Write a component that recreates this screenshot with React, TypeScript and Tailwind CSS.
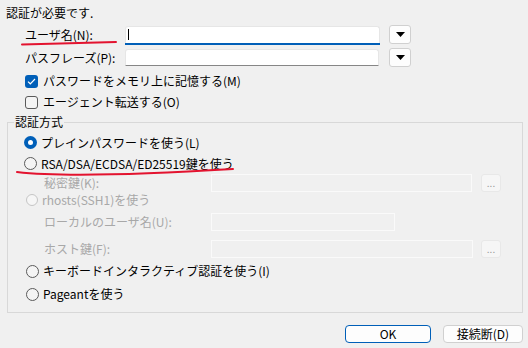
import React from "react";

const Radio = ({ state }: { state: "on" | "off" | "dis" }) => {
  if (state === "on")
    return (
      <span className="flex h-[13px] w-[13px] shrink-0 items-center justify-center rounded-full bg-[#005fb8]">
        <span className="h-[5px] w-[5px] rounded-full bg-white" />
      </span>
    );
  if (state === "dis")
    return <span className="h-[12px] w-[12px] shrink-0 rounded-full border border-[#c5c5c5] bg-[#f6f6f6]" />;
  return <span className="h-[13px] w-[13px] shrink-0 rounded-full border border-[#5a5a5a] bg-[#f4f4f4]" />;
};

const DropBtn = () => (
  <div className="flex h-[19px] w-[22px] items-center justify-center rounded-[3px] border border-[#d0d0d0] bg-[#fdfdfd]">
    <svg width="9" height="5" viewBox="0 0 9 5">
      <path d="M0 0H9L4.5 5Z" fill="#000" />
    </svg>
  </div>
);

const DotsBtn = () => (
  <div className="flex h-[18px] w-[20px] items-center justify-center rounded-[3px] border border-[#e8e8e8] bg-[#f6f6f6] text-[10px] leading-none text-[#9a9a9a]">
    ...
  </div>
);

const DisInput = ({ w }: { w: string }) => (
  <div className={`h-[18px] ${w} border border-[#fafafa] bg-[#f0f0f0]`} />
);

export default function App() {
  return (
    <div className="relative h-[348px] w-[528px] overflow-hidden bg-[#f0f0f0] font-['Noto_Sans_CJK_JP',sans-serif] text-[12px] leading-none text-black">
      {/* header */}
      <div className="flex h-[25px] items-center pl-[6px]">認証が必要です.</div>

      {/* username */}
      <div className="flex h-[19px] items-center">
        <div className="w-[125px] pl-[25px]">ユーザ名(N):</div>
        <div className="relative h-[17px] w-[255px] rounded-t-[3px] border border-b-0 border-[#e6e6e6] bg-white">
          <div className="absolute left-[2px] top-[2px] h-[11px] w-[1px] bg-black" />
          <div className="absolute -left-[1px] -right-[1px] bottom-[-2px] h-[2px] bg-[#005fb8]" />
        </div>
        <div className="ml-[9px]">
          <DropBtn />
        </div>
      </div>

      {/* passphrase */}
      <div className="mt-[4px] flex h-[19px] items-center">
        <div className="w-[125px] pl-[25px]">パスフレーズ(P):</div>
        <div className="h-[17px] w-[254px] rounded-t-[3px] border border-b-[#868686] border-[#e6e6e6] bg-white" />
        <div className="ml-[10px]">
          <DropBtn />
        </div>
      </div>

      {/* checkboxes */}
      <div className="mt-[5px] flex h-[18px] items-center gap-[5px] pl-[25px]">
        <span className="flex h-[13px] w-[13px] items-center justify-center rounded-[3px] bg-[#005fb8]">
          <svg width="9" height="7" viewBox="0 0 9 7">
            <path d="M1 3.6L3.3 5.8L8 1" stroke="#fff" strokeWidth="1.2" fill="none" />
          </svg>
        </span>
        <span>パスワードをメモリ上に記憶する(M)</span>
      </div>
      <div className="mt-[3px] flex h-[18px] items-center gap-[5px] pl-[25px]">
        <span className="h-[13px] w-[13px] rounded-[3px] border border-[#5a5a5a] bg-[#f4f4f4]" />
        <span>エージェント転送する(O)</span>
      </div>

      {/* group box */}
      <div className="relative ml-[7px] mt-[11px] h-[191px] w-[516px] border border-[#d8d8d8] pt-[10px]">
        <div className="absolute left-[6px] top-[-8px] bg-[#f0f0f0] px-[1px] leading-[14px]">認証方式</div>

        <div className="flex h-[19px] items-center gap-[4px] pl-[16px]">
          <Radio state="on" />
          <span>プレインパスワードを使う(L)</span>
        </div>
        <div className="mt-[2px] flex h-[19px] items-center gap-[4px] pl-[16px]">
          <Radio state="off" />
          <span>RSA/DSA/ECDSA/ED25519鍵を使う</span>
        </div>

        <div className="mt-[1px] flex h-[18px] items-center text-[#a8a8a8]">
          <div className="w-[203px] pl-[36px]">秘密鍵(K):</div>
          <DisInput w="w-[261px]" />
          <div className="ml-[9px]">
            <DotsBtn />
          </div>
        </div>

        <div className="flex h-[15px] items-center gap-[4px] pl-[18px] text-[#a8a8a8]">
          <Radio state="dis" />
          <span>rhosts(SSH1)を使う</span>
        </div>

        <div className="mt-[6px] flex h-[18px] items-center text-[#a8a8a8]">
          <div className="w-[203px] pl-[36px]">ローカルのユーザ名(U):</div>
          <DisInput w="w-[184px]" />
        </div>

        <div className="mt-[9px] flex h-[18px] items-center text-[#a8a8a8]">
          <div className="w-[203px] pl-[36px]">ホスト鍵(F):</div>
          <DisInput w="w-[262px]" />
          <div className="ml-[8px]">
            <DotsBtn />
          </div>
        </div>

        <div className="mt-[4px] flex h-[18px] items-center gap-[4px] pl-[18px]">
          <Radio state="off" />
          <span>キーボードインタラクティブ認証を使う(I)</span>
        </div>
        <div className="mt-[5px] flex h-[18px] items-center gap-[4px] pl-[18px]">
          <Radio state="off" />
          <span>Pageantを使う</span>
        </div>
      </div>

      {/* buttons */}
      <div className="mt-[12px] flex h-[18px] items-center justify-end gap-[12px] pr-[5px]">
        <div className="flex h-[18px] w-[86px] items-center justify-center rounded-[4px] border border-[#005fb8] bg-[#fdfdfd]">
          OK
        </div>
        <div className="flex h-[18px] w-[80px] items-center justify-center rounded-[4px] border border-[#d0d0d0] bg-[#fdfdfd]">
          接続断(D)
        </div>
      </div>

      {/* red annotation strokes */}
      <svg className="pointer-events-none absolute left-0 top-0" width="528" height="348">
        <path d="M22 44.5 Q 70 43 116 42" stroke="#e3132f" strokeWidth="2" fill="none" strokeLinecap="round" />
        <path d="M17 172 C 60 177, 150 174, 233 169" stroke="#e3132f" strokeWidth="2" fill="none" strokeLinecap="round" />
      </svg>
    </div>
  );
}
